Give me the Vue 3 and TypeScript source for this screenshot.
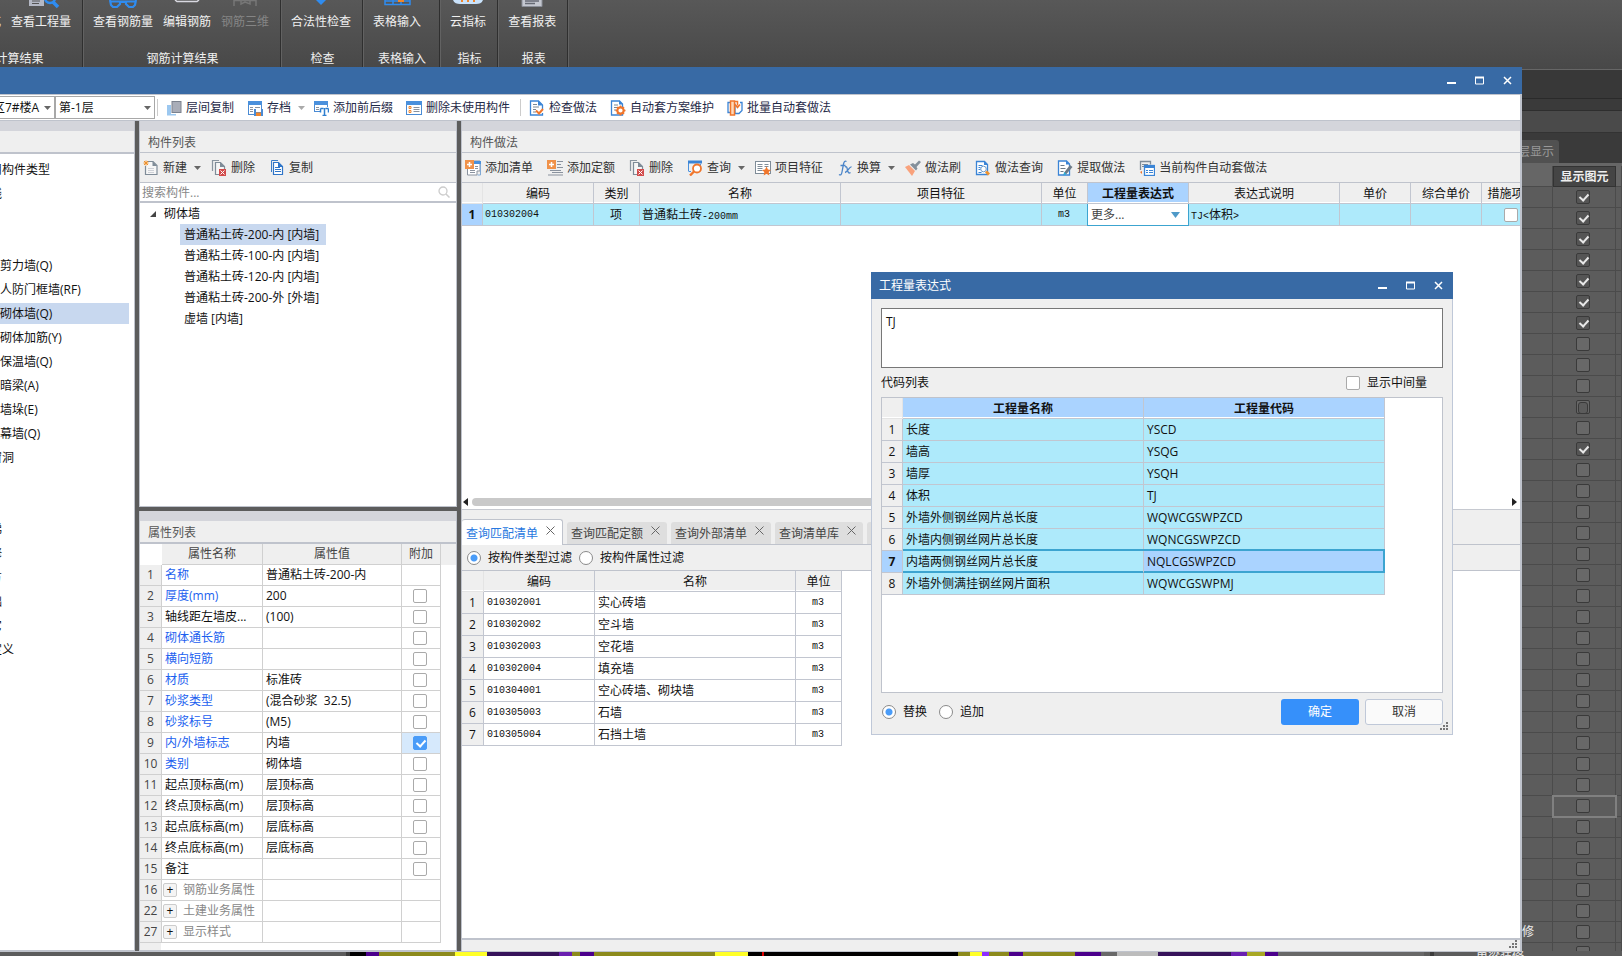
<script setup lang="ts">
import { ref } from 'vue'

interface Tool {
  icon: string
  label: string
  caret?: boolean
  sep?: boolean
}

const icons: Record<string, string> = {
  layers: '<path d="M1 5h4v9h5v1.500H1z" fill="#9cc8f0"/><rect x="6" y="1.500" width="9" height="11" fill="#a9adb8" stroke="#7c828e"/>',
  archive: '<rect x="1.500" y="1.500" width="13" height="13" fill="#fff" stroke="#4a8bd4"/><path d="M1 1h14v4H1z" fill="#4a90dc"/><path d="M3 7.500h3M3 9.500h3M3 11.500h3M8 7.500h5" stroke="#8a929e"/><path d="M7 9h9v7H7z" fill="#4a8bd4"/><rect x="9" y="9" width="5" height="3" fill="#fff"/><rect x="9" y="12.500" width="5" height="3.500" fill="#f0862c"/>',
  affix: '<rect x="1.500" y="1.500" width="13" height="10" fill="#fff" stroke="#4a8bd4"/><path d="M1 1h14v4H1z" fill="#4a90dc"/><path d="M3 7.500h3M3 9.500h3" stroke="#8a929e"/><path d="M7 7h9v7H7z" fill="#fff"/><path d="M7.500 8.500h3M12.500 8.500h3M11.500 8v7M7.500 8.500v4M15.500 8.500v4M9.500 15.500h4" stroke="#2f7fd0" stroke-width="1.500"/>',
  unused: '<rect x="0.500" y="1.500" width="15" height="13" fill="#fff" stroke="#4a8bd4"/><path d="M0 1h16v4H0z" fill="#4a90dc"/><path d="M3 6.500h2v2H3zM3 10.500h2v2H3z" fill="none" stroke="#f0862c"/><path d="M7.500 7.500h6M7.500 9.500h6M7.500 11.500h6" stroke="#8a929e"/>',
  check: '<path d="M1.500 1h8l4 4v10h-12z" fill="#fff" stroke="#3a84d6" stroke-width="1.300"/><path d="M9 .5v5h5z" fill="#3a84d6"/><path d="M4 4.500h4M4 7h6M4 9.500h4M4 12h3" stroke="#7b8894"/><path d="M7 9h8v4H7z" fill="#fff"/><path d="M7 10.500l3 3 4-4.500" fill="none" stroke="#f0762c" stroke-width="2"/>',
  scheme: '<path d="M1.500 1h8l3 3v11h-11z" fill="#fff" stroke="#3a84d6" stroke-width="1.300"/><path d="M9 .5v4h4z" fill="#3a84d6"/><path d="M4 5h4M4 7.500h4M4 10h2" stroke="#7b8894"/><circle cx="10.500" cy="10.500" r="3.200" fill="#fff" stroke="#f0762c" stroke-width="2.200"/><path d="M10.500 5.500v2M10.500 13.500v2M5.500 10.500h2M13.500 10.500h2M7 7l1.500 1.500M12.500 12.500L14 14M14 7l-1.500 1.500M8.500 12.500L7 14" stroke="#f0762c" stroke-width="1.500"/>',
  batch: '<path d="M3 2.500H1v10h2M13 2.500h2v8l-3 3H8v-10" fill="#fff" stroke="#3a84d6" stroke-width="1.300"/><rect x="3.500" y="1" width="4" height="14" fill="#ffd9b8" stroke="#f0762c" stroke-width="1.500"/><path d="M8 1.500h2.500v4M8 4.500l2.500 3 2.500-3" fill="none" stroke="#f0762c" stroke-width="1.500"/>',
  addList: '<path d="M6 1h9v10h-3v4H2.500v-6" fill="#fff" stroke="#8a929e"/><path d="M8 1h8v3H8z" fill="#4a90dc"/><path d="M15.500 4v11h-3" fill="none" stroke="#7fa8d4"/><path d="M5 10.500h5M5 12.500h5M10 6.500h3M10 8.500h3" stroke="#8a929e"/><rect width="9" height="9" fill="#f0924a"/><path d="M4.500 2v5M2 4.500h5" stroke="#fff" stroke-width="1.500"/>',
  addQuota: '<path d="M10 1.500h6M10 4.500h4M10 7.500h6M3 10.500h11M5 12.500h11M1 15h15" stroke="#8a929e" stroke-width="1.200"/><rect width="9" height="9" fill="#f0924a"/><path d="M4.500 2v5M2 4.500h5" stroke="#fff" stroke-width="1.500"/>',
  remove: '<path d="M1.500 11V.5H8" fill="none" stroke="#8a95a0" stroke-width="1.200"/><path d="M4.500 2.500h5l4 4v8h-9z" fill="#f6f6f6" stroke="#7f8c98" stroke-width="1.200"/><path d="M9 2v5h5z" fill="#7f8c98"/><rect x="8" y="9" width="7" height="7" fill="#d24b4b"/><path d="M9.500 10.500l4 4M13.500 10.500l-4 4" stroke="#fff"/>',
  query: '<path d="M1.500 11V1M1.500 11.500H4M13.500 4v2" fill="none" stroke="#4a90dc"/><path d="M1 0.500h14v3H1z" fill="#3a84d6"/><circle cx="10" cy="8.500" r="4" fill="#fff" stroke="#f0762c" stroke-width="1.800"/><path d="M7 11.500L3 15.500" stroke="#f0762c" stroke-width="2.400"/>',
  feature: '<rect x="0.500" y="1.500" width="15" height="12" fill="#fff" stroke="#7f8c98"/><path d="M2.500 4.500h5M2.500 6.500h5M2.500 8.500h5M2.500 10.500h5M9.500 4.500h4M9.500 6.500h4" stroke="#7f8c98"/><path d="M11.500 6.500l1.400 3 3.100.4-2.300 2.200.6 3.400-2.800-1.700-2.800 1.700.6-3.400L7 9.900l3.100-.4z" fill="#f0762c"/>',
  fx: '<path d="M9.500 1.500C8 .5 7 1.500 6.500 4L5 12C4.500 15 3.500 15.500 2 14.500M3.500 5.500h5M8 7c2-1 2 1 2.500 3s1 4 3 2.500M14.500 7c-2-.5-4 5-6.500 5.500" fill="none" stroke="#4a84c8" stroke-width="1.300"/>',
  brush: '<path d="M0 7l4-2 6 6-3 5z" fill="#f9a27c"/><path d="M5 4.500l6 6 1.500-2-1-1.500 4.500-5-2-1.500-4 4-2-1.500z" fill="#84909b"/>',
  methodQuery: '<path d="M1.500 1.500h8l3 3v10h-11z" fill="#fff" stroke="#3a84d6" stroke-width="1.300"/><path d="M9 1v4h4z" fill="#3a84d6"/><path d="M3.500 5.500h4M3.500 7.500h2M3.500 9.500h2M3.500 12.500h3" stroke="#3a84d6"/><circle cx="8.500" cy="9" r="2.800" fill="#fff" stroke="#6c9ac8"/><path d="M12 10.500l3 3-2 2-3-3z" fill="#f0922c"/>',
  extract: '<path d="M1.500 1h8l3 3v11h-11z" fill="#fff" stroke="#3a84d6" stroke-width="1.300"/><path d="M9 .5v4h4z" fill="#3a84d6"/><path d="M3.500 5.500h4M3.500 8.500h5M3.500 11.500h3" stroke="#6d7b88"/><path d="M13 5l2.500 2-6 7-3 1 1-3z" fill="#6d7b88"/><path d="M7 12l2.500 2-3 1.500z" fill="#2bb0d8"/>',
  current: '<path d="M1.500 10V1.500h10v3" fill="none" stroke="#7f8c98" stroke-width="1.300"/><path d="M3 4.500h6M3 6.500h2" stroke="#7f8c98"/><rect x="5.500" y="5.500" width="10" height="10" fill="#fff" stroke="#3a84d6" stroke-width="1.300"/><path d="M5 5h11v3H5z" fill="#3a84d6"/><path d="M7 10.500h2M7 12.500h2M10 10.500h4M10 12.500h4" stroke="#3a84d6"/><path d="M1 12l2-1v3z" fill="#f0762c"/>',
  create: '<path d="M5 1.500h5l4 4v9H2.500V6" fill="#f6f6f6" stroke="#7f8c98" stroke-width="1.200"/><path d="M9.500 1v5H14z" fill="#7f8c98"/><path d="M5 8.500h6M5 10.500h6M5 12.500h6" stroke="#cdd0d6"/><path d="M3 .5v5M.5 3h5M1 1l4 4M5 1L1 5" stroke="#f0922c"/>',
  copy: '<path d="M2.500 12V.5H9" fill="none" stroke="#3a7cc8"/><path d="M4.500 2.500h5l4 4v8h-9z" fill="#fff" stroke="#2f75c8" stroke-width="1.200"/><path d="M6 7.500h5M6 9.500h6M6 11.500h6" stroke="#2f75c8"/><path d="M9 2v5h5z" fill="#2f75c8"/>',
  rQuantity: '<path d="M4 0v6h15V0" fill="#b4b8c4"/><path d="M7 1h8M7 3.500h7" stroke="#555"/><circle cx="25" cy="-2" r="5" fill="none" stroke="#2f8cf0" stroke-width="2.500"/><path d="M28 2l5 5" stroke="#2f8cf0" stroke-width="3.500"/>',
  rGlasses: '<path d="M3 0l1 5 2 2h4l3-3V2h6v2l3 3h4l2-2 1-5M3 1.500h26" fill="none" stroke="#2f8cf0" stroke-width="2.200"/>',
  rEdit: '<path d="M4 0l2 1.500h20L28 0" fill="none" stroke="#d8d8e0" stroke-width="1.500"/>',
  rCube: '<path d="M5 0v6M5 .5h22V6M12 1v3l4-2 5 2V1" fill="none" stroke="#777" stroke-width="1.500"/>',
  rCheck: '<path d="M11 0h10l-5 5z" fill="#2f8cf0"/>',
  rTable: '<path d="M4 0v4.500h25V0M12 0v4M20 0v4M4 1h25" fill="none" stroke="#2f8cf0" stroke-width="1.500"/><path d="M17 0h6v2h-6z" fill="#f0862c"/>',
  rCloud: '<path d="M1 0c1 3 4 4 7 4h16c3 0 6-1 7-4z" fill="#c9e2fb"/><path d="M9 0h2v2H9zM15 0h2v2h-2zM21 0h2v2h-2z" fill="#f0862c"/>',
  rReport: '<path d="M6 0v6.500h20V0" fill="#c4c7d0" stroke="#8a8e98"/><path d="M9 1h14M9 3.500h10" stroke="#666a74" stroke-width="1.500"/>'
}

const ribbon = [
  { label: '土建计算结果', tools: [{ icon: '', label: '查看计算式' }, { icon: 'rQuantity', label: '查看工程量' }] },
  { label: '钢筋计算结果', tools: [{ icon: 'rGlasses', label: '查看钢筋量' }, { icon: 'rEdit', label: '编辑钢筋' }, { icon: 'rCube', label: '钢筋三维', off: true }] },
  { label: '检查', tools: [{ icon: 'rCheck', label: '合法性检查' }] },
  { label: '表格输入', wide: true, tools: [{ icon: 'rTable', label: '表格输入' }] },
  { label: '指标', tools: [{ icon: 'rCloud', label: '云指标' }] },
  { label: '报表', tools: [{ icon: 'rReport', label: '查看报表' }] }
] as { label: string; wide?: boolean; tools: { icon: string; label: string; off?: boolean }[] }[]

const mainTools: Tool[] = [
  { icon: 'layers', label: '层间复制' },
  { icon: 'archive', label: '存档', caret: true },
  { icon: 'affix', label: '添加前后缀' },
  { icon: 'unused', label: '删除未使用构件', sep: true },
  { icon: 'check', label: '检查做法' },
  { icon: 'scheme', label: '自动套方案维护' },
  { icon: 'batch', label: '批量自动套做法' }
]
const listTools: Tool[] = [
  { icon: 'create', label: '新建', caret: true },
  { icon: 'remove', label: '删除' },
  { icon: 'copy', label: '复制' }
]
const methodTools: Tool[] = [
  { icon: 'addList', label: '添加清单' },
  { icon: 'addQuota', label: '添加定额' },
  { icon: 'remove', label: '删除' },
  { icon: 'query', label: '查询', caret: true },
  { icon: 'feature', label: '项目特征' },
  { icon: 'fx', label: '换算', caret: true },
  { icon: 'brush', label: '做法刷' },
  { icon: 'methodQuery', label: '做法查询' },
  { icon: 'extract', label: '提取做法' },
  { icon: 'current', label: '当前构件自动套做法' }
]

const typeRows = ['常用构件类型', '轴线', '', '', '#剪力墙(Q)', '#人防门框墙(RF)', '#砌体墙(Q)', '#砌体加筋(Y)', '#保温墙(Q)', '#暗梁(A)', '#墙垛(E)', '#幕墙(Q)', '门窗洞', '', '', '楼梯', '装修', '土方', '基础', '其它', '自定义']

const components = ['普通粘土砖-200-内 [内墙]', '普通粘土砖-100-内 [内墙]', '普通粘土砖-120-内 [内墙]', '普通粘土砖-200-外 [外墙]', '虚墙 [内墙]']

interface Prop { no: number; name: string; value: string; kind: 'blue' | 'black' | 'group' }
const props: Prop[] = [
  { no: 1, name: '名称', value: '普通粘土砖-200-内', kind: 'blue' },
  { no: 2, name: '厚度(mm)', value: '200', kind: 'blue' },
  { no: 3, name: '轴线距左墙皮...', value: '(100)', kind: 'black' },
  { no: 4, name: '砌体通长筋', value: '', kind: 'blue' },
  { no: 5, name: '横向短筋', value: '', kind: 'blue' },
  { no: 6, name: '材质', value: '标准砖', kind: 'blue' },
  { no: 7, name: '砂浆类型', value: '(混合砂浆  32.5)', kind: 'blue' },
  { no: 8, name: '砂浆标号', value: '(M5)', kind: 'blue' },
  { no: 9, name: '内/外墙标志', value: '内墙', kind: 'blue' },
  { no: 10, name: '类别', value: '砌体墙', kind: 'blue' },
  { no: 11, name: '起点顶标高(m)', value: '层顶标高', kind: 'black' },
  { no: 12, name: '终点顶标高(m)', value: '层顶标高', kind: 'black' },
  { no: 13, name: '起点底标高(m)', value: '层底标高', kind: 'black' },
  { no: 14, name: '终点底标高(m)', value: '层底标高', kind: 'black' },
  { no: 15, name: '备注', value: '', kind: 'black' },
  { no: 16, name: '钢筋业务属性', value: '', kind: 'group' },
  { no: 22, name: '土建业务属性', value: '', kind: 'group' },
  { no: 27, name: '显示样式', value: '', kind: 'group' }
]

const tabs = ['查询匹配清单', '查询匹配定额', '查询外部清单', '查询清单库']
const matches = [
  ['010302001', '实心砖墙'],
  ['010302002', '空斗墙'],
  ['010302003', '空花墙'],
  ['010302004', '填充墙'],
  ['010304001', '空心砖墙、砌块墙'],
  ['010305003', '石墙'],
  ['010305004', '石挡土墙']
]
const codes = [
  ['长度', 'YSCD'],
  ['墙高', 'YSQG'],
  ['墙厚', 'YSQH'],
  ['体积', 'TJ'],
  ['外墙外侧钢丝网片总长度', 'WQWCGSWPZCD'],
  ['外墙内侧钢丝网片总长度', 'WQNCGSWPZCD'],
  ['内墙两侧钢丝网片总长度', 'NQLCGSWPZCD'],
  ['外墙外侧满挂钢丝网片面积', 'WQWCGSWPMJ']
]

const displayRows = Array.from({ length: 37 }, (_, i) => ({
  id: i,
  on: i < 7 || i === 12,
  partial: i === 10,
  text: i === 35 ? '修' : ''
}))

const model: [number, number, string][] = [
  [346, 4, '#3c3c3c'], [350, 16, '#000'], [366, 13, '#4b008c'], [379, 76, '#8c8a1c'], [455, 32, '#ffff28'],
  [487, 72, '#36125a'], [559, 13, '#6a1fb0'], [572, 8, '#8c8a1c'], [580, 14, '#4b008c'], [594, 121, '#8c8a1c'],
  [715, 33, '#ffff28'], [748, 210, '#000'], [762, 2, '#e00000'], [958, 12, '#8c8a1c'], [970, 12, '#ffff28'],
  [982, 7, '#8c2cff'], [989, 20, '#8c8a1c'], [1009, 14, '#4b008c'], [1023, 52, '#8c8a1c'], [1075, 26, '#4b008c'],
  [1101, 16, '#686868'], [1117, 41, '#bcbcbc'], [1158, 73, '#36125a'], [1231, 16, '#6a1fb0'], [1247, 18, '#a8a824'],
  [1265, 13, '#4b008c'], [1278, 146, '#686868'], [1430, 4, '#3c3c3c']
]

const building = ref('a')
const floor = ref('-1')
const keyword = ref('')
const expr = ref('TJ')
const filterBy = ref('type')
const mode = ref('replace')
const attached = ref<number[]>([9])
</script>

<template>
  <div class="desktop">
    <header class="ribbon">
      <section v-for="g in ribbon" :key="g.label" class="rgroup" :class="{ wide: g.wide }">
        <div class="rtools">
          <button v-for="t in g.tools" :key="t.label" type="button" class="rbtn" :class="{ off: t.off }">
            <svg width="32" height="9" viewBox="0 0 32 9" aria-hidden="true" v-html="icons[t.icon] || ''"></svg>
            <span>{{ t.label }}</span>
          </button>
        </div>
        <div class="rlabel">{{ g.label }}</div>
      </section>
    </header>

    <aside class="side">
      <div class="side-a"></div>
      <div class="side-b"></div>
      <div class="side-c"></div>
      <div class="side-tabs"><button type="button">层显示</button></div>
      <table class="display">
        <colgroup><col class="w-edge"><col class="w-show"><col></colgroup>
        <thead><tr><th></th><th class="dk">显示图元</th><th></th></tr></thead>
        <tbody>
          <tr v-for="r in displayRows" :key="r.id">
            <td>{{ r.text }}</td>
            <td class="c" :class="{ cursor: r.id === 29 }">
              <input type="checkbox" class="dcheck" :class="{ partial: r.partial }" :checked="r.on" :aria-label="`显示图元 ${r.id + 1}`">
            </td>
            <td></td>
          </tr>
        </tbody>
      </table>
    </aside>

    <footer class="canvas">
      <svg height="5" width="1434" aria-hidden="true">
        <rect v-for="(m, i) in model" :key="i" :x="m[0]" y="0" :width="m[1]" height="5" :fill="m[2]" />
      </svg>
      <span>单梁装修</span>
    </footer>

    <main class="window">
      <div class="titlebar">
        <div class="winbtns">
          <button type="button" aria-label="最小化"><svg width="9" height="9"><path d="M0 7h9" stroke="#fff" stroke-width="2" /></svg></button>
          <button type="button" aria-label="最大化"><svg width="9" height="9"><path d="M.5 1v7h8V1" fill="none" stroke="#fff" /><path d="M0 1.500h9" stroke="#fff" stroke-width="2" /></svg></button>
          <button type="button" aria-label="关闭"><svg width="9" height="9"><path d="M1 1l7 7M8 1L1 8" stroke="#fff" stroke-width="1.500" /></svg></button>
        </div>
      </div>

      <nav class="maintools">
        <div class="combo first">
          <select v-model="building" aria-label="楼栋"><option value="a">区7#楼A</option></select>
          <svg class="tri" width="7" height="4"><path d="M0 0h7L3.500 4z" fill="#666" /></svg>
        </div>
        <div class="combo second">
          <select v-model="floor" aria-label="楼层"><option value="-1">第-1层</option></select>
          <svg class="tri" width="7" height="4"><path d="M0 0h7L3.500 4z" fill="#666" /></svg>
        </div>
        <i class="vsep"></i>
        <template v-for="t in mainTools" :key="t.label">
          <button type="button" class="tool" :class="{ drop: t.caret }">
            <svg width="16" height="16" viewBox="0 0 16 16" aria-hidden="true" v-html="icons[t.icon]"></svg>
            <span>{{ t.label }}</span>
            <svg v-if="t.caret" class="caret" width="7" height="4"><path d="M0 0h7L3.500 4z" fill="#aaa" /></svg>
          </button>
          <i v-if="t.sep" class="vsep inner"></i>
        </template>
      </nav>

      <div class="body">
        <section class="pane types">
          <div class="strip"></div>
          <div class="phead thick"></div>
          <ul>
            <li v-for="(t, i) in typeRows" :key="i" :class="{ child: t[0] === '#', on: i === 6 }"><span>{{ t.replace('#', '') }}</span></li>
          </ul>
        </section>

        <div class="middle">
          <section class="pane complist">
            <div class="strip"></div>
            <h2 class="phead">构件列表</h2>
            <div class="ptools">
              <button v-for="t in listTools" :key="t.label" type="button" class="tool" :class="{ drop: t.caret }">
                <svg width="16" height="16" viewBox="0 0 16 16" aria-hidden="true" v-html="icons[t.icon]"></svg>
                <span>{{ t.label }}</span>
                <svg v-if="t.caret" class="caret" width="7" height="4"><path d="M0 0h7L3.500 4z" fill="#666" /></svg>
              </button>
            </div>
            <label class="search">
              <input v-model="keyword" type="text" placeholder="搜索构件..." aria-label="搜索构件">
              <svg width="12" height="12"><circle cx="5" cy="5" r="4" fill="none" stroke="#ccc" stroke-width="1.300" /><path d="M8 8l3.500 3.500" stroke="#ccc" stroke-width="1.500" /></svg>
            </label>
            <div class="tree">
              <div class="root"><svg width="8" height="8"><path d="M7 1v6H1z" fill="#444" /></svg>砌体墙</div>
              <ul>
                <li v-for="(c, i) in components" :key="c"><span :class="{ on: i === 0 }">{{ c }}</span></li>
              </ul>
            </div>
          </section>

          <section class="pane propbox">
            <div class="strip"></div>
            <h2 class="phead thick">属性列表</h2>
            <div class="propwrap">
              <table class="props">
                <colgroup><col class="w-no"><col class="w-name"><col class="w-val"><col class="w-att"><col></colgroup>
                <thead><tr><th class="blank"></th><th>属性名称</th><th>属性值</th><th>附加</th><th class="tail"></th></tr></thead>
                <tbody>
                  <tr v-for="p in props" :key="p.no">
                    <th scope="row">{{ p.no }}</th>
                    <td :class="p.kind"><button v-if="p.kind === 'group'" type="button" class="plus" :aria-label="`展开 ${p.name}`">+</button>{{ p.name }}</td>
                    <td class="val">{{ p.value }}</td>
                    <td class="c" :class="{ picked: p.no === 9 }">
                      <input v-if="p.kind !== 'group' && p.no > 1" v-model="attached" :value="p.no" type="checkbox" class="check" :aria-label="`附加 ${p.name}`">
                    </td>
                    <td class="tail"></td>
                  </tr>
                </tbody>
              </table>
            </div>
          </section>
        </div>

        <div class="right">
          <section class="upper">
            <div class="strip"></div>
            <h2 class="phead">构件做法</h2>
            <div class="ptools">
              <button v-for="t in methodTools" :key="t.label" type="button" class="tool" :class="{ drop: t.caret }">
                <svg width="16" height="16" viewBox="0 0 16 16" aria-hidden="true" v-html="icons[t.icon]"></svg>
                <span>{{ t.label }}</span>
                <svg v-if="t.caret" class="caret" width="7" height="4"><path d="M0 0h7L3.500 4z" fill="#666" /></svg>
              </button>
            </div>
            <div class="gridwrap">
              <table class="grid methods">
                <colgroup>
                  <col class="w21"><col class="w111"><col class="w46"><col class="w201"><col class="w201"><col class="w46"><col class="w101"><col class="w151"><col class="w71"><col class="w71"><col class="w60">
                </colgroup>
                <thead>
                  <tr><th class="corner"></th><th>编码</th><th>类别</th><th>名称</th><th>项目特征</th><th>单位</th><th class="hot">工程量表达式</th><th>表达式说明</th><th>单价</th><th>综合单价</th><th>措施项目</th></tr>
                </thead>
                <tbody>
                  <tr>
                    <th scope="row" class="hot">1</th>
                    <td class="code">010302004</td>
                    <td class="c">项</td>
                    <td>普通黏土砖<span class="mono">-200mm</span></td>
                    <td></td>
                    <td class="c code">m3</td>
                    <td class="cellcombo">
                      <div>
                        <select aria-label="工程量表达式"><option>更多...</option></select>
                        <svg width="9" height="6"><path d="M0 0h9L4.500 6z" fill="#4f9ac8" /></svg>
                      </div>
                    </td>
                    <td><span class="mono">TJ&lt;</span>体积<span class="mono">&gt;</span></td>
                    <td></td>
                    <td></td>
                    <td class="c"><input type="checkbox" class="check" aria-label="措施项目"></td>
                  </tr>
                </tbody>
              </table>
            </div>
            <div class="hscroll">
              <svg width="5" height="8"><path d="M5 0v8L0 4z" fill="#222" /></svg>
              <i></i>
              <svg width="5" height="8"><path d="M0 0v8l5-4z" fill="#222" /></svg>
            </div>
          </section>

          <section class="lower">
            <div class="tabs">
              <button v-for="(t, i) in tabs" :key="t" type="button" class="tab" :class="{ on: i === 0 }">
                <span>{{ t }}</span>
                <svg width="9" height="9"><path d="M.5.5l8 8M8.500.5l-8 8" stroke="#666" /></svg>
              </button>
              <button type="button" class="tab more" aria-label="查询定额库"></button>
            </div>
            <div class="filters">
              <label><input v-model="filterBy" type="radio" value="type" name="filter" class="radio">按构件类型过滤</label>
              <label><input v-model="filterBy" type="radio" value="prop" name="filter" class="radio">按构件属性过滤</label>
            </div>
            <div class="matchwrap">
              <table class="grid matches">
                <colgroup><col class="w22"><col class="w111"><col class="w201"><col class="w46"></colgroup>
                <thead><tr><th class="corner"></th><th>编码</th><th>名称</th><th>单位</th></tr></thead>
                <tbody>
                  <tr v-for="(m, i) in matches" :key="m[0]">
                    <th scope="row">{{ i + 1 }}</th>
                    <td class="code">{{ m[0] }}</td>
                    <td>{{ m[1] }}</td>
                    <td class="c code">m3</td>
                  </tr>
                </tbody>
              </table>
            </div>
            <div class="status"><svg width="9" height="9"><path d="M6 0h2v2H6zM3 3h2v2H3zM6 3h2v2H6zM0 6h2v2H0zM3 6h2v2H3zM6 6h2v2H6z" fill="#777" /></svg></div>
          </section>
        </div>
      </div>
    </main>

    <form class="dialog" role="dialog" aria-label="工程量表达式" @submit.prevent>
      <div class="titlebar">
        <span>工程量表达式</span>
        <div class="winbtns">
          <button type="button" aria-label="最小化"><svg width="9" height="9"><path d="M0 7h9" stroke="#fff" stroke-width="2" /></svg></button>
          <button type="button" aria-label="最大化"><svg width="9" height="9"><path d="M.5 1v7h8V1" fill="none" stroke="#fff" /><path d="M0 1.500h9" stroke="#fff" stroke-width="2" /></svg></button>
          <button type="button" aria-label="关闭"><svg width="9" height="9"><path d="M1 1l7 7M8 1L1 8" stroke="#fff" stroke-width="1.500" /></svg></button>
        </div>
      </div>
      <div class="dbody">
        <textarea v-model="expr" aria-label="表达式"></textarea>
        <div class="drow">
          <span>代码列表</span>
          <label><input type="checkbox" class="check">显示中间量</label>
        </div>
        <div class="codewrap">
          <table class="grid codes">
            <colgroup><col class="w21"><col class="w241"><col class="w241"></colgroup>
            <thead><tr><th class="corner"></th><th class="hot">工程量名称</th><th class="hot">工程量代码</th></tr></thead>
            <tbody>
              <tr v-for="(c, i) in codes" :key="c[1]" :class="{ sel: i === 6 }">
                <th scope="row" :class="{ hot: i === 6 }">{{ i + 1 }}</th>
                <td>{{ c[0] }}</td>
                <td>{{ c[1] }}</td>
              </tr>
            </tbody>
          </table>
        </div>
        <div class="dfoot">
          <label><input v-model="mode" type="radio" value="replace" name="mode" class="radio">替换</label>
          <label><input v-model="mode" type="radio" value="append" name="mode" class="radio">追加</label>
          <button type="submit" class="ok">确定</button>
          <button type="button" class="cancel">取消</button>
        </div>
      </div>
      <svg class="grip" width="9" height="9"><path d="M6 0h2v2H6zM3 3h2v2H3zM6 3h2v2H6zM0 6h2v2H0zM3 6h2v2H3zM6 6h2v2H6z" fill="#777" /></svg>
    </form>
  </div>
</template>

<style>
html, body { background: #5c5c5c; overflow: hidden; }
</style>

<style scoped>
.desktop, .desktop * { box-sizing: border-box; }
.desktop {
  position: relative;
  display: grid;
  grid-template: 70px minmax(0, 1fr) 5px / minmax(0, 1fr) 100px;
  height: 100vh;
  overflow: hidden;
  font: 12px/16px "Open Sans", "Noto Sans CJK SC", sans-serif;
  color: #111;
  white-space: nowrap;
}
button, input, select, textarea { font: inherit; color: inherit; margin: 0; padding: 0; border: 0; background: none; outline: 0; }
svg { display: block; flex: none; }
ul { list-style: none; margin: 0; padding: 0; }
h2 { margin: 0; font: inherit; }

.ribbon { grid-column: 1 / 3; display: flex; margin-left: -69px; background: linear-gradient(#585858, #484848); border-bottom: 1px solid #666; }
.rgroup { display: flex; flex-direction: column; padding: 0 11px 0 10px; border-right: 1px solid #2f2f2f; box-shadow: 1px 0 #626262; }
.rgroup.wide { padding-right: 18px; }
.rtools { display: flex; gap: 10px; }
.rbtn { display: flex; flex-direction: column; align-items: center; gap: 5px; color: #f0f0f0; }
.rbtn.off { color: #858585; }
.rbtn svg { overflow: visible; }
.rlabel { margin: 21px -3px 0 0; text-align: center; color: #f0f0f0; }
.wide .rlabel { margin-right: -10px; }

.side { grid-area: 2 / 2; background: #5c5c5c; overflow: hidden; }
.side-a { height: 29px; background: #383838; border-bottom: 1px solid #2a2a2a; }
.side-b { height: 12px; background: #3a3a3a; border-bottom: 1px solid #2e2e2e; }
.side-c { height: 22px; background: #4a4a4a; border-bottom: 1px solid #333; }
.side-tabs { height: 33px; padding-top: 7px; background: #3a3a3a; border-bottom: 3px solid #666; }
.side-tabs button { width: 37px; height: 23px; background: #515151; color: #999; border-radius: 0 3px 0 0; direction: rtl; padding-right: 5px; }
.display { width: 100%; table-layout: fixed; border-collapse: separate; border-spacing: 0; color: #eee; }
.display th, .display td { height: 21px; padding: 0; border-right: 1px solid #4b4b4b; border-bottom: 1px solid #4b4b4b; text-align: left; }
.display th { background: #666; }
.display .dk { background: #454545; text-align: center; border: 1px solid #333; }
.w-edge { width: 31px; }
.w-show { width: 63px; }
.display .cursor { outline: 2px solid #808080; outline-offset: -1px; }
.dcheck { appearance: none; display: block; width: 14px; height: 14px; margin: 0 23px; border: 1px solid #3a3a3a; border-radius: 2px; background: #686868; }
.dcheck:checked { background: #555; }
.dcheck:checked::after { content: ""; display: block; width: 4px; height: 7px; margin: 1px 4px; border: solid #e8e8e8; border-width: 0 2px 2px 0; transform: rotate(42deg); }
.dcheck.partial::after { content: ""; display: block; height: 10px; margin: 1px; border: 1px solid #3a3a3a; border-radius: 3px; background: #5c5c5c; }

.canvas { grid-column: 1 / 3; display: flex; overflow: hidden; background: #5c5c5c; color: #eee; }
.canvas span { margin-left: 42px; line-height: 12px; }

.window { position: absolute; inset: 67px 100px 4px 0; display: flex; flex-direction: column; border-right: 2px solid #bfc3cc; background: #fff; border-bottom: 1px solid #bfc3cc; }
.titlebar { flex: none; height: 27px; display: flex; align-items: center; justify-content: space-between; padding: 0 10px 0 8px; background: #386aa5; color: #fff; }
.window .titlebar { margin-right: -2px; }
.winbtns { display: flex; gap: 19px; margin-left: auto; }
.maintools { flex: none; height: 27px; display: flex; align-items: center; border: solid #bfc3cc; border-width: 1px 0; color: #1f2a48; }
.combo { position: relative; height: 23px; border: 1px solid #a8a8a8; color: #111; }
.combo.first { width: 64px; margin-left: -9px; }
.combo.second { width: 100px; }
.combo select { appearance: none; width: 100%; height: 100%; padding-left: 3px; }
.combo.first select { padding-left: 1px; }
.tri { position: absolute; right: 3px; top: 9px; pointer-events: none; }
.vsep { width: 1px; height: 17px; margin: 0 8px 0 2px; background: #ccc; }
.vsep.inner { margin: 0 8px 0 -3px; }
.tool { display: flex; align-items: center; gap: 4px; height: 20px; padding-right: 14px; }
.tool.drop { padding-right: 10px; }
.caret { margin-left: 3px; }
.maintools .tool { padding-right: 13px; }
.maintools .tool.drop { padding-right: 8px; }

.body { flex: 1; min-height: 0; display: flex; background: #5c5c5c; gap: 4px; }
.pane { background: #fff; border: solid #bfc3cc; border-width: 0 1px 1px; }
.strip { flex: none; height: 10px; background: #d4d5db; }
.phead { flex: none; height: 22px; padding: 2px 8px 0; background: #efefef; border-bottom: 1px solid #bfc3cc; color: #555; line-height: 20px; }
.phead.thick { height: 23px; border-bottom-width: 2px; }
.types { width: 135px; border-left: 0; overflow: hidden; }
.types ul { padding-top: 3px; }
.types li { height: 24px; display: flex; align-items: center; margin-left: -22px; }
.types li span { line-height: 21px; }
.types li.child { margin-left: 0; }
.types li.on span { width: 129px; background: #c8d8ef; }

.middle { width: 318px; display: flex; flex-direction: column; gap: 4px; }
.complist { flex: 1; min-height: 0; display: flex; flex-direction: column; }
.ptools { flex: none; height: 30px; display: flex; align-items: center; padding-left: 3px; background: #efefef; border-bottom: 1px solid #bfc3cc; color: #333; overflow: hidden; }
.search { flex: none; height: 20px; display: flex; align-items: center; padding: 0 6px 0 2px; border-bottom: 2px solid #bfc3cc; }
.search input { flex: 1; height: 18px; }
.search input::placeholder { color: #888; opacity: 1; }
.tree { line-height: 21px; color: #111; }
.root { display: flex; align-items: center; gap: 7px; padding-left: 9px; }
.tree li { display: flex; padding-left: 40px; }
.tree li span { padding: 0 7px 0 4px; }
.tree .on { background: #c8d8ef; }

.propwrap { padding-bottom: 7px; background: linear-gradient(90deg, #efefef 21px, #fff 21px); }
.props { width: 100%; table-layout: fixed; border-collapse: separate; border-spacing: 0; }
.props th, .props td { height: 21px; padding: 0 0 0 3px; border: solid #d0d0d0; border-width: 0 1px 1px 0; font-weight: 400; text-align: left; background: #fff; }
.props th { background: #efefef; color: #444; text-align: center; padding: 0; }
.props thead .blank { background: #fff; border-color: #fff; }
.props .tail { border: 0; }
.props .blue { color: #1c5fef; }
.props .group { color: #888; }
.props .val { white-space: pre; }
.props .c { padding: 0 2px 0 0; }
.props .picked { background: #d6e9fc; }
.w-no { width: 22px; }
.w-name { width: 101px; }
.w-val { width: 139px; }
.w-att { width: 39px; }
.plus { width: 14px; height: 14px; margin: 0 6px 0 -2px; border: 1px solid #ccc; border-radius: 2px; background: #f4f4f4; color: #111; line-height: 11px; }

.check { appearance: none; display: block; flex: none; width: 14px; height: 14px; margin: 0 auto; border: 1px solid #aaa; border-radius: 2px; background: #fff; }
.check:checked { background: #4a9cf8; border-color: #4a9cf8; }
.check:checked::after { content: ""; display: block; width: 4px; height: 7px; margin: 1px 4px; border: solid #fff; border-width: 0 2px 2px 0; transform: rotate(42deg); }
.radio { appearance: none; display: block; width: 14px; height: 14px; margin: 0 7px 0 0; border: 1px solid #8a8a8a; border-radius: 50%; background: #fff; }
.radio:checked { background: radial-gradient(circle, #4a9cf8 3px, #fff 4px); }

.right { flex: 1; min-width: 0; display: flex; flex-direction: column; border-left: 1px solid #bfc3cc; background: #fff; }
.upper { flex: 389 1 0; min-height: 0; display: flex; flex-direction: column; border-bottom: 1px solid #c6c9d0; }
.gridwrap { flex: 1; min-height: 0; overflow: hidden; }
.grid { table-layout: fixed; border-collapse: separate; border-spacing: 0; width: 0; }
.grid th, .grid td { height: 22px; padding: 0 0 0 3px; border: solid #c2c6d0; border-width: 0 1px 1px 0; font-weight: 400; text-align: left; }
.grid th { background: #efefef; text-align: center; padding: 1px 0 0; overflow: hidden; }
.grid thead th { height: 21px; padding-top: 2px; box-shadow: inset 0 -1px #fff; }
.grid thead th.corner { border-color: #e4e4e4; }
.grid th.hot { background: #aad3ff; font-weight: 700; }
.grid .c { text-align: center; padding: 0 1px 0 0; }
.grid .code { font: 10px/16px "Liberation Mono", monospace; }
.mono { font: 10px/12px "Liberation Mono", monospace; }
.methods td, .codes td { background: #aeeafb; }
.grid.methods td { padding-left: 2px; }
.w21 { width: 21px; } .w22 { width: 22px; } .w46 { width: 46px; } .w60 { width: 60px; } .w71 { width: 71px; } .w101 { width: 101px; }
.w111 { width: 111px; } .w151 { width: 151px; } .w201 { width: 201px; } .w241 { width: 241px; }
.grid.methods .c { padding: 0 1px 0 0; }
.grid.methods .cellcombo { padding: 0; background: #fff; border-color: #3ca4d0; box-shadow: -1px 0 #3ca4d0; }
.cellcombo div { display: flex; align-items: center; padding: 0 8px 0 3px; color: #444; }
.cellcombo select { appearance: none; flex: 1; min-width: 0; height: 20px; }
.hscroll { flex: none; height: 15px; display: flex; align-items: center; gap: 4px; padding: 0 3px 0 1px; }
.hscroll i { width: 82%; height: 8px; margin-right: auto; border-radius: 4px; background: #c9c9c9; }

.lower { flex: 442 1 0; min-height: 0; display: flex; flex-direction: column; }
.tabs { flex: none; height: 35px; display: flex; align-items: flex-end; gap: 4px; background: #efefef; border-bottom: 1px solid #bfc3cc; }
.tab { display: flex; gap: 8px; height: 22px; padding: 4px 7px 0 4px; background: #dedede; border-radius: 3px 3px 0 0; color: #444; }
.tab.on { height: 26px; margin-bottom: -1px; padding-top: 6px; background: #fff; border: 1px solid #bfc3cc; border-width: 1px 1px 0 0; color: #2878e0; }
.tab.more { width: 60px; }
.filters { flex: none; height: 26px; display: flex; align-items: center; gap: 7px; padding-left: 5px; background: #efefef; border-bottom: 1px solid #bfc3cc; }
label { display: flex; align-items: center; }
.matchwrap { flex: 1; min-height: 0; overflow: hidden; }
.status { flex: none; height: 13px; display: flex; justify-content: flex-end; padding-right: 2px; background: #efefef; border-top: 2px solid #bfc3cc; }

.dialog { position: absolute; top: 272px; right: 169px; width: 582px; background: #efefef; border: solid #bfc8d8; border-width: 0 1px 1px; }
.dialog .titlebar { margin: 0 -1px; }
.dbody { padding: 9px; }
textarea { display: block; width: 100%; height: 60px; padding: 5px 4px; border: 1px solid #777; background: #fff; resize: none; }
.drow { display: flex; justify-content: space-between; align-items: center; height: 29px; padding-right: 16px; }
.drow .check { margin-right: 7px; }
.codewrap { height: 296px; background: #fff; border: 1px solid #bfc3cc; }
.codes .sel td { border-bottom-color: #3ca4d0; box-shadow: 0 -2px #3ca4d0, inset 0 -1px #3ca4d0; }
.codes .sel td:last-child { background: #aad3ff; border-right: 2px solid #3ca4d0; }
.dfoot { display: flex; align-items: center; padding: 6px 0 0 1px; }
.dfoot label { margin-right: 12px; }
.ok, .cancel { width: 78px; height: 26px; border-radius: 3px; }
.ok { margin-left: auto; background: #3690fa; color: #fff; }
.cancel { margin-left: 6px; background: #fafafa; border: 1px solid #bfc8d8; color: #333; }
.grip { position: absolute; right: 3px; bottom: 3px; }
</style>
